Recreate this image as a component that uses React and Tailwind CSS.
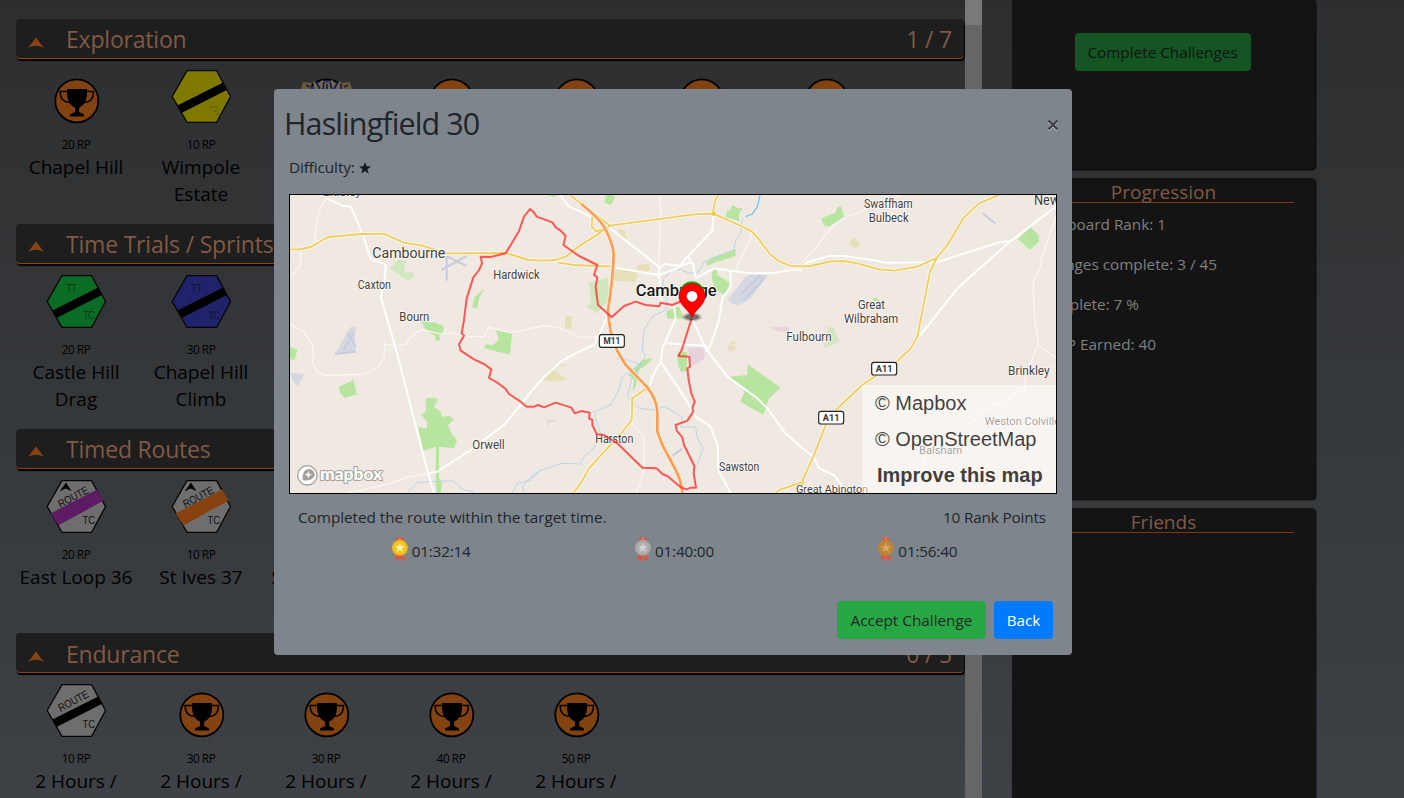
import React from "react";

function Arrow() {
  return (
    <svg width="16" height="12" viewBox="0 0 16 12">
      <path d="M8 0.5 L16 11 Q8 6.5 0 11 Z" fill="#8a4312" />
    </svg>
  );
}

function Cup() {
  return (
    <svg width="60" height="60" viewBox="0 0 60 60" className="shrink-0">
      <circle cx="30.8" cy="33.8" r="21.5" fill="#824310" stroke="#000" strokeWidth="1.8" />
      <path d="M21 22 H41 V28 Q40 38 33.2 40.5 V45 L38 47.5 V49.5 H24 V47.5 L29 45 V40.5 Q22 38 21 28 Z" fill="#000" />
      <path d="M21.5 24.5 H14.2 Q14 35.5 25 35.5 M40.5 24.5 H47.4 Q47.6 35.5 37 35.5" fill="none" stroke="#000" strokeWidth="1.6" />
    </svg>
  );
}

function Crown() {
  return (
    <svg width="60" height="60" viewBox="0 0 60 60" className="shrink-0">
      <circle cx="30.8" cy="33.8" r="21.5" fill="#2b3166" stroke="#000" strokeWidth="1.8" />
      <path d="M7 15 L16 16 L14 24 L5 22 Z M54 15 L45 16 L47 24 L56 22 Z" fill="#6b5837" />
      <path d="M17 14 L22 17 L26 13 L31 16 L36 13 L40 17 L45 14 L43 24 H19 Z" fill="#75664e" />
      <path d="M20 15 L24 22 M28 15 L27 23 M31 17 V23 M34 15 L36 23 M42 15 L38 22 M10 18 L14 20 M52 18 L48 20" stroke="#1a1f52" strokeWidth="1.8" />
    </svg>
  );
}

function Hex({ fill, band, kind, pointer }) {
  const wide = kind === "route" && pointer;
  return (
    <svg width="60" height="60" viewBox="0 0 60 60" className="shrink-0">
      <path d="M16 3.6 H45.6 L59.5 29.5 L45.6 55.4 H16 L1.2 29.5 Z" fill={fill} stroke="#050505" strokeWidth="1.3" />
      {wide ? (
        <path d="M4.6 36.4 L51.2 12.4 L57.6 23.5 L12.3 48.6 Z" fill={band} />
      ) : (
        <path d="M6.4 38.4 L52.2 15.4 L56.3 22.8 L10.5 46 Z" fill={band} />
      )}
      {pointer && <path d="M20 5.5 L25.5 14 L19.5 11.5 L13.5 14.5 Z" fill="#050505" />}
      {kind === "tt" && (
        <g fontFamily="Liberation Sans, sans-serif" fontSize="10" fill="#000" fillOpacity="0.5">
          <text x="20" y="20" textLength="11">TT</text>
          <text x="37" y="47" textLength="12">TC</text>
        </g>
      )}
      {kind === "route" && (
        <g fontFamily="Liberation Sans, sans-serif" fill="#101010">
          <text x="14.5" y="31" fontSize="11" textLength="33" lengthAdjust="spacingAndGlyphs" transform="rotate(-28 14.5 31)">ROUTE</text>
          <text x="36.5" y="47" fontSize="11" textLength="12.5" lengthAdjust="spacingAndGlyphs">TC</text>
        </g>
      )}
      {kind === "faint" && (
        <path d="M38 40 h4 m1 0 h4 m0 3 l-4 2 m2 3 l3 -2" stroke="#000" strokeOpacity="0.3" fill="none" />
      )}
    </svg>
  );
}

const sections = [
  {
    title: "Exploration",
    count: "1 / 7",
    items: [
      { icon: <Cup />, rp: "20 RP", name: ["Chapel Hill"] },
      { icon: <Hex fill="#807900" band="#000" kind="faint" />, rp: "10 RP", name: ["Wimpole", "Estate"] },
      { icon: <Crown /> },
      { icon: <Cup /> },
      { icon: <Cup /> },
      { icon: <Cup /> },
      { icon: <Cup /> },
    ],
  },
  {
    title: "Time Trials / Sprints",
    items: [
      { icon: <Hex fill="#0b6d25" band="#000" kind="tt" />, rp: "20 RP", name: ["Castle Hill", "Drag"] },
      { icon: <Hex fill="#20236b" band="#000" kind="tt" />, rp: "30 RP", name: ["Chapel Hill", "Climb"] },
    ],
  },
  {
    title: "Timed Routes",
    items: [
      { icon: <Hex fill="#6e6e6e" band="#5c1b62" kind="route" pointer />, rp: "20 RP", name: ["East Loop 36"] },
      { icon: <Hex fill="#6e6e6e" band="#88420f" kind="route" pointer />, rp: "10 RP", name: ["St Ives 37"] },
      { icon: <Cup />, name: ["S"], start: true },
    ],
  },
  {
    title: "Endurance",
    count: "0 / 5",
    items: [
      { icon: <Hex fill="#6e6e6e" band="#000" kind="route" />, rp: "10 RP", name: ["2 Hours /"] },
      { icon: <Cup />, rp: "30 RP", name: ["2 Hours /"] },
      { icon: <Cup />, rp: "30 RP", name: ["2 Hours /"] },
      { icon: <Cup />, rp: "40 RP", name: ["2 Hours /"] },
      { icon: <Cup />, rp: "50 RP", name: ["2 Hours /"] },
    ],
  },
];

function Section({ title, count, items }) {
  return (
    <section className="h-[204.75px] shrink-0">
      <div className="ml-4 flex h-10 w-[948px] items-center rounded border-b border-[#8a4312] bg-[#1e1e1e] pl-3 pr-3 pt-0.5 text-[23px] tracking-[-0.2px] text-[#805a44] shadow-[1px_2px_1px_#000]">
        <span className="mt-1.5 w-[38px]">
          <Arrow />
        </span>
        <span className="flex-1">{title}</span>
        <span>{count}</span>
      </div>
      <div className="ml-[13.5px] flex pt-2">
        {items.map((it, i) => (
          <div key={i} className="flex w-[125px] shrink-0 flex-col items-center text-black">
            {it.icon}
            <div className="mt-2 h-[19px] text-[11.8px] leading-[18px] tracking-[-0.45px]">{it.rp}</div>
            <div className={it.start ? "w-full pl-2 text-[19px] leading-[27px]" : "text-center text-[19px] leading-[27px]"}>
              {(it.name || []).map((n) => (
                <div key={n}>{n}</div>
              ))}
            </div>
          </div>
        ))}
      </div>
    </section>
  );
}

function Shield({ x, y, children }) {
  return (
    <g>
      <rect x={x} y={y} width="75" height="38" rx="7" fill="#fff" stroke="#222" strokeWidth="3.5" />
      <text x={x + 37.5} y={y + 28} fontSize="25" fontWeight="700" fill="#333" textAnchor="middle" textLength="50" lengthAdjust="spacingAndGlyphs">
        {children}
      </text>
    </g>
  );
}

/* x, baseline, width, font size, label */
const places = [
  [116, 18, 116, 34, "Eltisley"],
  [265, 205, 219, 43, "Cambourne"],
  [221, 297, 100, 36, "Caxton"],
  [346, 392, 90, 36, "Bourn"],
  [628, 267, 139, 36, "Hardwick"],
  [565, 777, 97, 36, "Orwell"],
  [934, 759, 114, 36, "Harston"],
  [1305, 842, 121, 36, "Sawston"],
  [1740, 55, 146, 36, "Swaffham"],
  [1754, 97, 120, 36, "Bulbeck"],
  [1722, 357, 81, 36, "Great"],
  [1680, 399, 163, 36, "Wilbraham"],
  [1507, 454, 136, 36, "Fulbourn"],
  [2172, 555, 125, 36, "Brinkley"],
  [2102, 706, 226, 35, "Weston Colville"],
  [1905, 793, 130, 35, "Balsham"],
  [1536, 909, 216, 35, "Great Abington"],
];

const majorWhite = [
  "M128 25 L175 47 L200 50 L235 130 L260 207 L305 224 L301 280 L290 320 L335 475 L432 850 L450 909",
  "M970 380 L945 435 L930 465 L880 487 L830 515 L768 573 L665 700 L560 780 L460 845 L432 850",
  "M828 15 L855 50 L890 65 L940 90 L985 120 L1125 230 V255",
  "M985 232 L1125 255 L1180 235 L1215 195 L1285 122 L1288 72",
  "M1130 235 L1140 222 L1190 228 L1225 215 M1210 195 L1228 225 L1235 265 L1290 235 L1345 243 L1400 250 L1460 250 L1520 240 L1552 239",
  "M1340 243 L1340 290 L1315 325 L1305 390 L1280 465 L1265 485",
  "M1125 255 L1132 330 M1170 345 L1175 385 L1135 475 L1130 515 L1110 550 L1095 592 M1130 515 L1200 620 L1235 680 L1280 710 L1302 770 L1303 840 L1340 909",
  "M1223 385 L1265 475 L1330 560 L1420 625 L1450 655 L1500 725 L1550 770 L1588 800 L1605 835 L1650 855 L1670 880 V895 M1148 460 L1270 468",
  "M1552 235 L1570 217 L1635 198 L1680 198 L1780 212 L1805 218 L1958 217 L2145 157 L2180 153 L2316 50 M2180 153 L2025 290 L1905 440",
];

const minorWhite = [
  "M128 25 Q95 60 92 165 M18 262 L50 225 V182",
  "M18 402 L60 425 L75 450 L85 460 L88 500 L84 515 L100 545 L118 556 L240 553 L285 530 L300 505 L302 462 L340 468 L365 463 L380 440 L412 418 L470 432 L500 428 L535 438 L600 440 L615 412 L680 428 L780 407 L830 415 L890 442 L945 440",
  "M432 850 L370 862 L310 883 L190 909",
  "M1125 15 L1130 60 L1125 230 M1410 122 L1355 240",
  "M1560 210 L1585 185 L1640 115 L1680 85 L1850 15",
  "M2316 80 L2270 210 V230 L2250 270 L2247 300 L2252 385 L2263 460 L2225 560 L2222 605 L2190 607 L2155 645 L2123 643 L2070 693 L2038 713 M2263 465 L2316 505 M1923 795 L1915 850 L1888 909",
  "M1040 697 L1078 740 L1082 840 L1055 909",
];

const yellowRoads = [
  "M18 178 L48 178 L80 171 L132 141 L232 132 L298 131 L360 158 L412 166 L490 190 L665 189 L735 210 L780 212 L815 210 L845 200 L890 165 L930 140 L978 107 L1230 73 L1288 71 L1365 105 L1405 125 L1430 155 L1458 192 L1480 210 L1515 227 L1548 229 L1580 228 L1640 214 L1680 213 L1720 220 L1785 238 L1832 242 L1900 230 L1958 204 L1990 165 L2040 82 L2085 40 L2145 15",
  "M858 15 L978 107 M925 80 L923 110 L935 123 L960 120",
  "M1303 15 Q1288 35 1288 70",
  "M1958 204 L1938 245 L1900 440 L1880 475 L1838 515 L1735 585 L1660 655 L1625 705 L1588 800 L1558 865 L1550 909",
  "M823 218 L870 225 L985 230",
  "M1093 592 L1045 625 L1043 690 L1008 735 L965 780 L915 835 L890 880 L868 909",
  "M1473 909 L1490 898 L1560 875",
];

const water = [
  "M1375 85 L1370 130 L1355 150 L1350 180 L1260 215 L1245 245 L1215 250 L1190 238 L1165 240 L1140 265 L1135 290 L1150 330 L1145 360 L1105 380 L1080 420 L1075 480 L1085 500 L1070 520 L1015 560 L1005 600 L980 645 L930 665 L940 700 L950 730 L930 775 L900 800 L890 822 L835 820 L768 842 L730 870 L715 890 L720 909",
  "M1000 505 L1030 510 L1070 522 L1045 560 L1030 620 L1065 655 L1110 660 L1140 650 L1170 665 L1195 683 L1190 710 L1235 712 L1240 745 L1257 775 L1240 825",
  "M370 909 L400 877 L505 872 L540 900 L570 905 M685 909 L700 880 L740 870 L765 845",
];

const parks = [
  "M412 393 L455 398 L480 410 L475 432 L466 436 L468 450 L455 453 L452 435 L425 422 Z",
  "M635 420 L684 430 L678 494 L600 475 L605 462 L625 466 L645 450 Z",
  "M565 353 L572 320 L600 297 L585 325 L580 353 Z",
  "M165 590 L208 570 L219 613 L182 624 L168 608 Z M18 470 L40 480 L32 510 L18 508 Z",
  "M426 624 H455 L462 630 L450 650 L470 665 L474 680 L495 677 L510 688 L492 705 L505 735 L519 750 L510 775 L465 770 V865 L474 880 L470 909 H459 L455 880 L456 770 L418 782 L402 712 L428 715 L430 695 L412 675 L425 665 Z",
  "M965 15 H990 L992 25 L980 45 L962 38 Z M792 15 H828 L808 22 Z",
  "M1330 58 L1340 62 L1345 45 L1362 55 L1375 55 L1365 72 V95 L1350 88 L1325 82 Z",
  "M1265 220 L1280 205 L1355 177 V198 L1290 218 L1270 228 Z",
  "M1285 243 L1298 236 L1300 255 L1338 278 L1325 315 L1295 300 L1283 265 Z",
  "M1148 362 L1185 350 L1200 385 L1150 386 Z",
  "M1183 487 L1210 485 L1208 543 L1190 545 L1180 515 Z",
  "M1338 560 L1390 555 L1390 522 L1490 593 L1455 625 L1438 674 L1368 635 L1382 605 Z",
  "M1032 555 L1075 510 L1103 503 L1098 515 L1065 540 L1055 590 L1045 605 L1050 570 Z",
  "M1612 85 L1655 68 L1660 50 H1672 L1680 80 L1635 110 L1618 105 Z",
  "M2202 147 L2240 112 L2264 135 L2265 155 L2238 180 Z",
  "M1764 328 L1775 323 L1790 335 L1785 345 Z",
];

const route =
  "M1223 385 L1193 480 L1183 498 L1216 500 L1218 530 L1210 535 L1214 570 L1222 610 L1232 635 L1225 655 L1228 665 L1210 692 L1175 705 L1178 722 L1195 742 L1200 765 L1231 828 L1229 850 L1236 893 L1220 893 L1208 898 L1190 892 L1150 858 L1135 852 L1118 835 L1075 833 L1000 760 L960 735 L938 732 L925 705 V690 L915 685 L917 668 L893 663 L872 670 L862 653 L815 638 L780 652 L762 645 L750 650 H728 L710 635 L675 612 L665 597 L640 578 L615 564 L622 538 L600 522 L570 508 L530 482 L525 463 L540 437 L533 430 L540 390 L548 325 L568 262 L585 240 L594 220 L590 200 L620 201 L665 190 L705 123 L720 80 L738 57 L748 65 L758 80 L805 97 L815 112 L830 122 L845 138 L838 165 L885 198 L940 225 L930 255 L940 262 L935 290 L942 345 L983 382 L1020 348 L1055 335 L1085 345 L1125 349 L1130 338 L1165 345 L1200 330";

const motorway =
  "M892 42 Q940 80 960 110 Q985 155 989 190 Q988 260 972 360 Q975 430 1000 483 L1025 525 L1090 592 Q1119 630 1120 665 V725 L1135 765 L1175 840 Q1193 875 1195 909";

function RouteMap() {
  return (
    <svg className="block h-full w-full" viewBox="18 15 2298 894" preserveAspectRatio="none" fontFamily="Roboto, Inter, sans-serif">
      <rect x="18" y="15" width="2298" height="894" fill="#f0e9e1" />
      <g fill="#b7e5a0">
        {parks.map((d) => (
          <path key={d} d={d} />
        ))}
      </g>
      <g fill="#d2e6c0">
        <path d="M315 233 L345 208 L370 215 L360 228 L362 250 L378 245 L392 250 L390 262 L372 273 Z" />
        <path d="M915 280 L970 262 L978 325 L940 370 L908 350 L922 335 Z" />
        <path d="M1630 410 L1650 415 L1655 430 L1668 455 L1650 463 L1618 473 L1632 440 Z" />
      </g>
      <g fill="#e6dfb8">
        <path d="M988 240 L1020 238 L1060 245 L1055 276 L990 272 Z M1060 225 L1095 222 L1098 240 L1080 248 L1058 240 Z" />
        <path d="M998 118 L1020 120 L1030 145 L1010 142 Z M843 378 H863 V417 H843 Z M774 570 L800 535 L850 568 L820 575 Z M823 522 L850 525 L840 531 Z" />
        <path d="M1330 465 L1352 468 L1355 480 L1335 484 Z M1337 455 L1355 453 L1350 468 Z M1695 158 L1710 143 L1728 160 L1718 180 Z" />
      </g>
      <path d="M790 706 V690 H814 V695 H796 V706 Z" fill="#e4d8ca" />
      <g fill="#d5d7e1">
        <path d="M1330 330 L1385 260 L1400 253 L1453 255 L1400 325 L1365 346 L1345 342 Z" />
        <path d="M152 492 L200 410 L218 412 L212 430 L215 488 Z M18 548 L60 552 L42 588 L30 575 Z" />
      </g>
      <g stroke="#c8cbe0" strokeWidth="6" fill="none">
        <path d="M488 198 V272 M472 240 L548 198 M490 200 L548 228" />
        <path d="M178 480 L210 430 M190 430 L215 470 M153 492 L215 485" />
        <path d="M1370 315 L1430 255 M1380 330 L1440 265 M1166 797 L1194 777 M2096 70 L2133 100" />
      </g>
      <path d="M1210 475 L1240 472 L1263 480 L1260 508 L1225 528 Z M1220 470 H1255 V482 H1220 Z M1458 412 L1515 410 V428 L1480 423 Z" fill="#e8d3dc" />
      <g fill="none" stroke="#acd3ea" strokeWidth="2.5">
        {water.map((d) => (
          <path key={d} d={d} />
        ))}
      </g>
      <path d="M1428 15 L1420 50 L1405 72 L1385 80" fill="none" stroke="#76c4ef" strokeWidth="4" />
      <g fill="none" stroke="#fbf8f4" strokeWidth="3.5" strokeLinejoin="round">
        {minorWhite.map((d) => (
          <path key={d} d={d} />
        ))}
      </g>
      <g fill="none" stroke="#fff" strokeWidth="6" strokeLinejoin="round">
        {majorWhite.map((d) => (
          <path key={d} d={d} />
        ))}
      </g>
      <g fill="none" stroke="#fdfaf4" strokeWidth="10" strokeLinejoin="round">
        {yellowRoads.map((d) => (
          <path key={d} d={d} />
        ))}
      </g>
      <g fill="none" stroke="#f0cd59" strokeWidth="5.5" strokeLinejoin="round">
        {yellowRoads.map((d) => (
          <path key={d} d={d} />
        ))}
      </g>
      <circle cx="1289" cy="71" r="7" fill="#f0cd59" />
      <circle cx="1092" cy="594" r="7" fill="#f0cd59" />
      <path d={motorway} fill="none" stroke="#fdf3e6" strokeWidth="12" />
      <path d={motorway} fill="none" stroke="#fb9d52" strokeWidth="8" />
      <g fill="#3e4043" stroke="#fffaf5" strokeWidth="5" strokeLinejoin="round" className="[paint-order:stroke]">
        {places.map(([x, y, w, s, label]) => (
          <text key={label} x={x} y={y} fontSize={s} textLength={w} lengthAdjust="spacingAndGlyphs">
            {label}
          </text>
        ))}
        <text x="2250" y="45" fontSize="42" textLength="196" lengthAdjust="spacingAndGlyphs">Newmarket</text>
        <text x="1055" y="319" fontSize="47" fontWeight="500" fill="#151617" textLength="243" lengthAdjust="spacingAndGlyphs">Cambridge</text>
      </g>
      <path d={route} fill="none" stroke="#ff2020" strokeOpacity="0.72" strokeWidth="6" strokeLinejoin="round" />
      <Shield x={946} y={434}>M11</Shield>
      <Shield x={1763} y={517}>A11</Shield>
      <Shield x={1604} y={664}>A11</Shield>
      <ellipse cx="1224" cy="381" rx="30" ry="13" fill="#000" fillOpacity="0.2" />
      <ellipse cx="1224" cy="381" rx="22" ry="9" fill="#000" fillOpacity="0.4" />
      <path d="M1192 300 A34 34 0 0 1 1256 300 Z" fill="#0db50d" stroke="#0db50d" strokeWidth="8" />
      <path d="M1224 383 C1216 360 1185 346 1185 319 A39 39 0 0 1 1263 319 C1263 346 1232 360 1224 383 Z" fill="#f00" stroke="#c50000" strokeWidth="2" />
      <circle cx="1224" cy="319" r="16" fill="#fff" />
      <circle cx="70" cy="856" r="29" fill="#fff" stroke="#a8a39e" strokeWidth="4" />
      <path d="M56 871 Q53 839 74 837 A17 17 0 0 1 92 855 Q88 874 56 871 Z" fill="#a6a19c" />
      <path d="M73 843 L76 851 L84 854 L76 857 L73 865 L70 857 L62 854 L70 851 Z" fill="#fff" />
      <text x="108" y="869" fontFamily="Lato, sans-serif" fontSize="51" fontWeight="900" fill="#fff" stroke="#a6a19c" strokeWidth="6" strokeLinejoin="round" textLength="187" lengthAdjust="spacingAndGlyphs" className="[paint-order:stroke]">
        mapbox
      </text>
    </svg>
  );
}

function Medal({ outer, ring, star }) {
  return (
    <svg width="18" height="26" viewBox="0 0 18 26">
      <path d="M5.5 0.5 H12.3 V5 H5.5 Z M5 17 H8.3 V21 L6.6 24.5 L5.8 22 L3.8 23 Z M9.5 17 H12.8 L14 23 L12 22 L11.2 24.5 L9.5 21 Z" fill="#e7503d" />
      <path d="M8.4 0.5 H9.4 V4 H8.4 Z" fill="#f3a28e" />
      <circle cx="8.9" cy="10.8" r="8" fill={outer} />
      <circle cx="8.9" cy="10.8" r="6" fill={ring} />
      <path d="M8.9 6 L10.2 9.1 L13.4 9.4 L11 11.5 L11.8 14.8 L8.9 13.1 L6 14.8 L6.8 11.5 L4.4 9.4 L7.6 9.1 Z" fill={star} />
    </svg>
  );
}

const medals = [
  { time: "01:32:14", outer: "#f0b91a", ring: "#f3c928", star: "#fdeeb0" },
  { time: "01:40:00", outer: "#a6a6a6", ring: "#b1b1b1", star: "#d2d2d2" },
  { time: "01:56:40", outer: "#b98434", ring: "#bb883d", star: "#dba965" },
];

function Modal() {
  return (
    <div className="absolute left-[274px] top-[89px] flex h-[566px] w-[798px] flex-col rounded bg-[#7e858c] text-[15.3px] text-[#212529]">
      <div className="flex h-[67px] items-center justify-between pl-2.5 pr-3 pt-[3px]">
        <h1 className="text-[30.5px] tracking-[-0.9px]">Haslingfield 30</h1>
        <svg width="14" height="14" viewBox="0 0 14 14" className="mt-0.5">
          <path d="M2.5 3.5 L11.5 12.5 M11.5 3.5 L2.5 12.5" stroke="#c3c7ca" strokeWidth="2.4" />
          <path d="M2.5 2.5 L11.5 11.5 M11.5 2.5 L2.5 11.5" stroke="#3e4246" strokeWidth="2.4" />
        </svg>
      </div>
      <div className="flex h-[38px] items-start gap-1 pl-[15px] leading-[22px]">
        <span className="tracking-[-0.1px]">Difficulty:</span>
        <svg width="12" height="12" viewBox="0 0 24 24" className="mt-[6px]" fill="#16191c">
          <path d="M12 0 L15 8.6 L24 8.9 L16.8 14.3 L19.4 23 L12 17.8 L4.6 23 L7.2 14.3 L0 8.9 L9 8.6 Z" />
        </svg>
      </div>
      <div className="relative mx-[15px] h-[300px] border border-black">
        <RouteMap />
        <div className="absolute bottom-0 right-0 flex h-[108px] w-[194px] flex-col bg-white/50 pl-[13px] font-['Liberation_Sans',sans-serif] text-[20px] leading-9 text-black/75">
          <span>© Mapbox</span>
          <span>© OpenStreetMap</span>
          <span className="whitespace-nowrap pl-0.5 font-bold">Improve this map</span>
        </div>
      </div>
      <div className="mt-[11px] flex justify-between pl-6 pr-[26px] leading-6">
        <span className="tracking-[-0.04px]">Completed the route within the target time.</span>
        <span className="tracking-[-0.15px]">10 Rank Points</span>
      </div>
      <div className="mx-[34px] mt-2 grid grid-cols-3 tracking-[-0.2px]">
        {medals.map((m) => (
          <div key={m.time} className="flex items-center justify-center gap-[3px] pl-0.5">
            <Medal outer={m.outer} ring={m.ring} star={m.star} />
            <span className="pt-0.5">{m.time}</span>
          </div>
        ))}
      </div>
      <div className="mb-4 mr-[19px] mt-auto flex justify-end gap-2">
        <button className="h-[38px] w-[149px] rounded bg-[#28a745]">Accept Challenge</button>
        <button className="h-[38px] w-[59px] rounded bg-[#007bff] text-white">Back</button>
      </div>
    </div>
  );
}

export default function App() {
  return (
    <div className="relative flex h-[798px] w-[1404px] overflow-hidden bg-gradient-to-b from-[#2d2e30] via-[#35383a] to-[#3e4145] font-['Open_Sans','Noto_Sans',sans-serif]">
      <main className="flex w-[965px] shrink-0 flex-col overflow-hidden pt-[19px]">
        {sections.map((s) => (
          <Section key={s.title} {...s} />
        ))}
      </main>
      <div className="w-[17px] shrink-0 bg-[#666]">
        <div className="h-[25px] bg-[#797979]" />
      </div>
      <aside className="ml-[30px] flex w-[303px] shrink-0 flex-col gap-[9px] text-[15.3px] text-[#808080]">
        <div className="flex h-[169px] shrink-0 justify-center rounded-b bg-[#141414] pr-0.5 pt-[33px] shadow-[1px_1px_2px_#000]">
          <button className="h-[38px] w-44 rounded bg-[#145523] text-[#101214]">Complete Challenges</button>
        </div>
        <div className="h-[321px] shrink-0 rounded bg-[#141414] px-[21px] shadow-[1px_1px_2px_#000]">
          <h2 className="h-[25px] border-b border-[#80380f] text-center text-[19px] leading-7 text-[#805a44]">Progression</h2>
          <div className="flex flex-col items-start pt-px leading-10">
            <span className="flex w-[133px] justify-end whitespace-nowrap">Leaderboard Rank: 1</span>
            <span className="flex w-[184px] justify-end whitespace-nowrap">Challenges complete: 3 / 45</span>
            <span className="flex w-[106px] justify-end whitespace-nowrap">Complete: 7 %</span>
            <span className="flex w-[123px] justify-end whitespace-nowrap">RP Earned: 40</span>
          </div>
        </div>
        <div className="h-[300px] shrink-0 rounded-t bg-[#141414] px-[21px] shadow-[1px_1px_2px_#000]">
          <h2 className="h-[25px] border-b border-[#80380f] text-center text-[19px] leading-7 text-[#805a44]">Friends</h2>
        </div>
      </aside>
      <Modal />
    </div>
  );
}
